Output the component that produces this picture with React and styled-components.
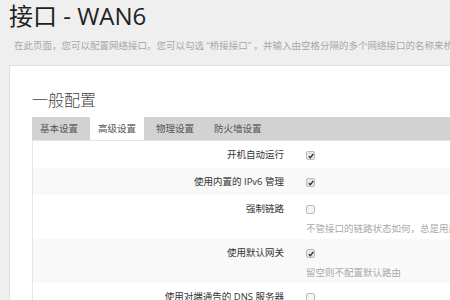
import React from 'react';
import styled, { createGlobalStyle } from 'styled-components';

const Global = createGlobalStyle`
  html, body {
    margin: 0;
    padding: 0;
    background: #efefef;
    font-family: "Open Sans", "Noto Sans CJK SC", sans-serif;
    overflow: hidden;
  }
`;

const Page = styled.div`
  width: 450px;
  height: 300px;
  overflow: hidden;
  padding: 0 0 0 9px;
  box-sizing: border-box;
`;

const Title = styled.h2`
  margin: 0;
  padding-top: 1px;
  font-size: 24px;
  font-weight: 400;
  color: #222;
  line-height: 29px;
  white-space: nowrap;
`;

const Intro = styled.p`
  margin: 9px 0 0 5px;
  font-size: 9.5px;
  color: #a8a8a8;
  white-space: nowrap;
  line-height: 14px;
`;

const Card = styled.div`
  margin-top: 12px;
  background: #fff;
  border: 1px solid #e2e2e2;
  border-right: none;
  padding: 22px 0 0 22px;
  height: 300px;
`;

const SectionTitle = styled.h3`
  margin: 0 0 7px;
  font-size: 16px;
  font-weight: 300;
  color: #444;
  line-height: 22px;
  font-family: "Noto Sans CJK SC", sans-serif;
`;

const Tabs = styled.ul`
  list-style: none;
  margin: 0;
  padding: 0;
  display: flex;
  background: #d2d2d2;
  height: 23px;
`;

const Tab = styled.li`
  padding: 0 8px;
  font-size: 9.5px;
  line-height: 23px;
  color: #555;
  background: ${({ active }) => (active ? '#fff' : 'transparent')};
  margin-right: 4px;
`;

const Table = styled.div`
  border-left: 1px solid #e6e6e6;
  border-top: 1px solid #e6e6e6;
`;

const Row = styled.div`
  display: grid;
  grid-template-columns: 251px 1fr;
  column-gap: 22px;
  background: ${({ striped }) => (striped ? '#f9f9f9' : '#fff')};
  padding: 7px 0 ${({ desc }) => (desc ? '3px' : '6px')};
`;

const Label = styled.div`
  text-align: right;
  font-size: 9.5px;
  color: #333;
  line-height: 14px;
  white-space: nowrap;
`;

const Field = styled.div`
  display: flex;
  flex-direction: column;
  gap: 8px;
  white-space: nowrap;
  overflow: hidden;
`;

const Box = styled.span`
  margin-top: 3px;
  width: 7px;
  height: 7px;
  border: 1px solid #bbb;
  border-radius: 2px;
  background: ${({ checked }) => (checked ? '#e6e6e6' : '#f4f4f4')};
  display: flex;
  align-items: center;
  justify-content: center;
  svg { display: block; }
`;

const Desc = styled.div`
  font-size: 9.5px;
  color: #aaa;
  line-height: 14px;
`;

const Check = ({ checked }) => (
  <Box checked={checked}>
    {checked && (
      <svg width="6" height="6" viewBox="0 0 6 6">
        <path d="M0.8 3.2 L2.3 4.7 L5.3 1" stroke="#333" strokeWidth="1.3" fill="none" />
      </svg>
    )}
  </Box>
);

const rows = [
  { label: '开机自动运行', checked: true },
  { label: '使用内置的 IPv6 管理', checked: true },
  { label: '强制链路', checked: false, desc: '不管接口的链路状态如何，总是用应用这些配置' },
  { label: '使用默认网关', checked: true, desc: '留空则不配置默认路由' },
  { label: '使用对端通告的 DNS 服务器', checked: false },
];

export default function App() {
  return (
    <Page>
      <Global />
      <Title>接口 - WAN6</Title>
      <Intro>在此页面，您可以配置网络接口。您可以勾选 “桥接接口” ，并输入由空格分隔的多个网络接口的名称来桥接多个接口。</Intro>
      <Card>
        <SectionTitle>一般配置</SectionTitle>
        <Tabs>
          <Tab>基本设置</Tab>
          <Tab active>高级设置</Tab>
          <Tab>物理设置</Tab>
          <Tab>防火墙设置</Tab>
        </Tabs>
        <Table>
          {rows.map((r, i) => (
            <Row key={r.label} striped={i % 2 === 1} desc={!!r.desc}>
              <Label>{r.label}</Label>
              <Field>
                <Check checked={r.checked} />
                {r.desc && <Desc>{r.desc}</Desc>}
              </Field>
            </Row>
          ))}
        </Table>
      </Card>
    </Page>
  );
}
